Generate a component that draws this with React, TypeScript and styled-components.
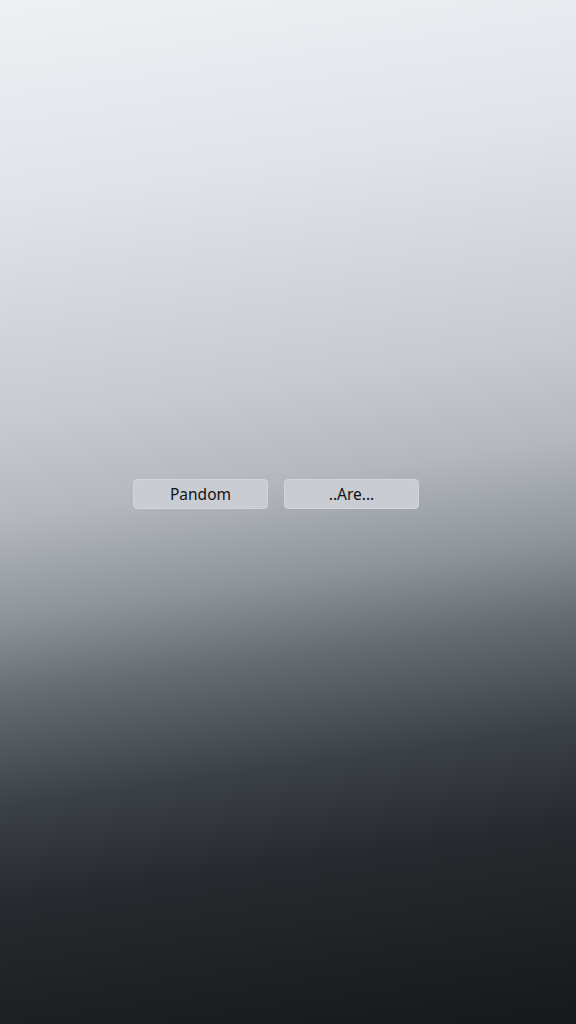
import React from "react";
import styled, { createGlobalStyle } from "styled-components";

const Global = createGlobalStyle`
  html, body { margin: 0; padding: 0; }
  body { font-family: "Noto Sans", "Open Sans", sans-serif; }
`;

const Screen = styled.div`
  width: 576px;
  height: 1024px;
  box-sizing: border-box;
  display: flex;
  align-items: center;
  justify-content: center;
  padding: 0 24px 36px 0;
  background: linear-gradient(
    172deg,
    #eef0f4 0%,
    #e1e3e9 18%,
    #c7cad1 38%,
    #b4b8be 47%,
    #8e949a 56%,
    #676c72 63%,
    #3c4146 73%,
    #262a2e 82%,
    #16191b 100%
  );
`;

const Row = styled.div`
  display: flex;
  gap: 16px;
`;

const Button = styled.button`
  width: 135px;
  height: 30px;
  box-sizing: border-box;
  border: 1px solid #d2d5d9;
  border-radius: 4px;
  background: #c9ccd2;
  color: #111214;
  font-family: "Noto Sans", "Open Sans", sans-serif;
  font-size: 15.5px;
  padding: 0 0 1px;
  display: flex;
  align-items: center;
  justify-content: center;
`;

export default function App() {
  return (
    <>
      <Global />
      <Screen>
        <Row>
          <Button>Pandom</Button>
          <Button>..Are...</Button>
        </Row>
      </Screen>
    </>
  );
}
